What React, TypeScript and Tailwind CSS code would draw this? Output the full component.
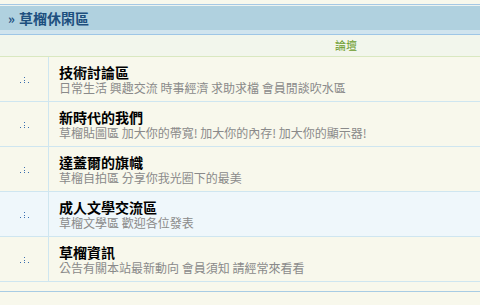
const forums = [
  { name: "技術討論區", desc: "日常生活 興趣交流 時事經濟 求助求檔 會員閒談吹水區", alt: false },
  { name: "新時代的我們", desc: "草榴貼圖區 加大你的帶寬! 加大你的內存! 加大你的顯示器!", alt: false },
  { name: "達蓋爾的旗幟", desc: "草榴自拍區 分享你我光圈下的最美", alt: false },
  { name: "成人文學交流區", desc: "草榴文學區 歡迎各位發表", alt: true },
  { name: "草榴資訊", desc: "公告有關本站最新動向 會員須知 請經常來看看", alt: false },
];

const Dots = () => (
  <svg width="9" height="7" viewBox="0 0 9 7" className="text-[#3b6fb0]">
    <rect x="4" y="0" width="1" height="1" fill="currentColor" />
    <rect x="4" y="3" width="1" height="1" fill="currentColor" />
    <rect x="0" y="5" width="1" height="1" fill="currentColor" />
    <rect x="4" y="5" width="1" height="1" fill="currentColor" />
    <rect x="8" y="5" width="1" height="1" fill="currentColor" />
  </svg>
);

const App = () => {
  return (
    <div
      className="w-[480px] h-[305px] bg-[#f8f8ec] pt-[4px] overflow-hidden"
      style={{ fontFamily: '"Noto Sans CJK TC", "Liberation Sans", sans-serif' }}
    >
      <div className="border-t border-[#a6c8e4]">
        <div className="border-t border-[#eef4f0] bg-[#b0d1df] h-[25px] flex items-center pl-[8px] gap-[4px]">
          <span className="text-[#1d4f7e] text-[13px] font-bold leading-none">»</span>
          <span className="text-[#1d4f7e] text-[14px] font-bold leading-none">草榴休閑區</span>
        </div>
        <div className="h-[4px] bg-[#d0e4ee] border-b border-[#9ec6e6] box-content" />
      </div>

      <div className="h-[21px] bg-[#f2f6ec] border-b border-[#d9e8c0] box-content flex items-center pl-[335px]">
        <span className="text-[#6b9b2b] text-[11px] leading-none">論壇</span>
      </div>

      {forums.map((f) => (
        <div
          key={f.name}
          className={`flex h-[44px] border-b border-[#cfe6f0] box-content ${f.alt ? "bg-[#eff7fb]" : ""}`}
        >
          <div className="w-[49px] flex items-center justify-center border-r border-[#cfe6f0] pt-[2px]">
            <Dots />
          </div>
          <div className="flex flex-col justify-center pl-[10px] pt-[1px]">
            <div className="text-[14px] font-bold text-black leading-[17px]">{f.name}</div>
            <div className="text-[12px] text-[#8a8a8a] leading-[14px]">{f.desc}</div>
          </div>
        </div>
      ))}

      <div className="mt-[9px] border-t border-[#a8cce4]" />
    </div>
  );
};

export default App;
